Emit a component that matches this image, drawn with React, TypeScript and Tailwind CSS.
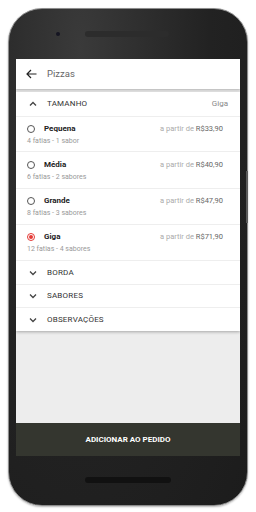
import React from "react";

const items = [
  { name: "Pequena", sub: "4 fatias - 1 sabor", price: "R$33,90", h: "h-[35px]" },
  { name: "Média", sub: "6 fatias - 2 sabores", price: "R$40,90", h: "h-[37px]" },
  { name: "Grande", sub: "8 fatias - 3 sabores", price: "R$47,90", h: "h-[36px]" },
  { name: "Giga", sub: "12 fatias - 4 sabores", price: "R$71,90", h: "h-[36px]", checked: true },
];

function Chevron({ up }: { up?: boolean }) {
  return (
    <svg width="8" height="6" viewBox="0 0 8 6" className="shrink-0">
      <path
        d={up ? "M1 4.5 L4 1.5 L7 4.5" : "M1 1.5 L4 4.5 L7 1.5"}
        fill="none"
        stroke="#444"
        strokeWidth="1.3"
      />
    </svg>
  );
}

export default function App() {
  return (
    <div className="w-[256px] h-[512px] bg-white pl-[8px] pt-[8px] font-['Roboto',sans-serif]">
      <div className="relative w-[240px] h-[498px] rounded-[34px] border border-[#8c8c8c] bg-[radial-gradient(ellipse_at_30%_8%,#3a3a3a,#222222_55%,#1c1c1c)] shadow-[0_1px_2px_rgba(0,0,0,0.3)] flex flex-col">
        <div className="absolute right-[-1px] top-[162px] w-[2px] h-[52px] bg-[#5a5a5a]" />
        {/* top bezel */}
        <div className="h-[50px] relative shrink-0">
          <div className="absolute left-[47px] top-[23px] w-[4px] h-[4px] rounded-full bg-[#151522]" />
          <div className="absolute left-[76px] top-[22px] w-[84px] h-[6px] rounded-full bg-[#2c2c2c]" />
        </div>
        {/* screen */}
        <div className="mx-[7px] h-[397px] bg-[#ededed] flex flex-col overflow-hidden">
          <div className="h-[30px] bg-white flex items-center pl-[10px] shadow-[0_1px_2px_rgba(0,0,0,0.25)] relative z-10 shrink-0">
            <svg width="11" height="10" viewBox="0 0 11 10">
              <path d="M10.5 5 H1.2 M5 1 L1 5 L5 9" fill="none" stroke="#222" strokeWidth="1.2" />
            </svg>
            <span className="ml-[10px] text-[9.5px] text-[#666]">Pizzas</span>
          </div>
          <div className="mt-[3px] bg-white shadow-[0_1px_3px_rgba(0,0,0,0.3)] shrink-0">
            <div className="h-[25px] flex items-center pl-[13px] pr-[12px] border-b border-[#eeeeee]">
              <Chevron up />
              <span className="ml-[10px] text-[8px] text-[#333] tracking-[0.2px]">TAMANHO</span>
              <span className="ml-auto text-[8px] text-[#888]">Giga</span>
            </div>
            {items.map((it) => (
              <div key={it.name} className={`${it.h} flex flex-col justify-center pl-[11px] pr-[17px] border-b border-[#eeeeee]`}>
                <div className="flex items-center h-[12px]">
                  {it.checked ? (
                    <div className="w-[8px] h-[8px] rounded-full border border-[#e53935] flex items-center justify-center shrink-0">
                      <div className="w-[4px] h-[4px] rounded-full bg-[#e53935]" />
                    </div>
                  ) : (
                    <div className="w-[8px] h-[8px] rounded-full border border-[#555] shrink-0" />
                  )}
                  <span className="ml-[9px] text-[8px] font-bold text-[#222]">{it.name}</span>
                  <span className="ml-auto text-[7.5px] text-[#aaa]">
                    a partir de <span className="text-[#666]">{it.price}</span>
                  </span>
                </div>
                <div className="mt-[1px] text-[7px] text-[#999] leading-[10px]">{it.sub}</div>
              </div>
            ))}
            {["BORDA", "SABORES", "OBSERVAÇÕES"].map((t, i) => (
              <div
                key={t}
                className={`${i === 0 ? "h-[24px]" : "h-[23px]"} flex items-center pl-[13px] ${i < 2 ? "border-b border-[#eeeeee]" : ""}`}
              >
                <Chevron />
                <span className="ml-[10px] text-[8px] text-[#333] tracking-[0.2px]">{t}</span>
              </div>
            ))}
          </div>
          <div className="flex-1" />
          <div className="h-[33px] bg-[#34362f] flex items-center justify-center shrink-0">
            <span className="text-[8px] font-bold text-white">ADICIONAR AO PEDIDO</span>
          </div>
        </div>
        {/* bottom bezel */}
        <div className="flex-1 relative">
          <div className="absolute left-[76px] top-[21px] w-[86px] h-[6px] rounded-full bg-[#111]" />
        </div>
      </div>
    </div>
  );
}
